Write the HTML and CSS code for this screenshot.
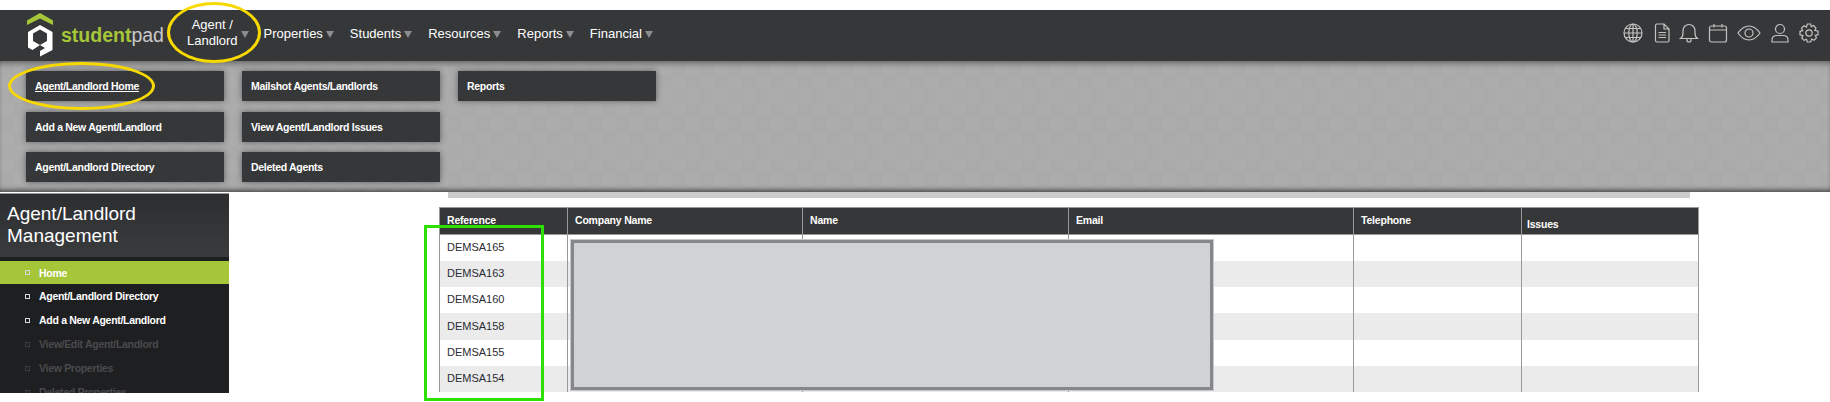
FILE: index.html
```html
<!DOCTYPE html>
<html lang="en">
  <head>
    <meta charset="UTF-8">
    <title>Studentpad - Agent/Landlord Management</title>
    <link rel="stylesheet" href="styles.css">
  </head>
  <body>
    <header class="topbar">
      <a class="logo" href="#">
        <svg class="logo-mark" viewBox="0 0 26 44" width="26" height="44">
          <path d="M0 7.500 L13 0 L26 7.500 V12 L13 5.500 L0 12 Z" fill="#a6c63a"/>
          <path fill-rule="evenodd" d="M13 12 L25.500 19 V37 L13 43.500 V38 L18 35 L13 32 L5.500 37 L1 34.500 V19 Z M13 16.500 L6 20.500 V28 L13 32 L20 28 V20.500 Z" fill="#fff"/>
        </svg>
        <span class="logo-text"><b>student</b>pad</span>
      </a>
      <nav class="mainnav">
        <a class="navitem navitem-two" href="#"><span>Agent /<br>Landlord</span><i class="caret"></i></a>
        <a class="navitem" href="#">Properties<i class="caret"></i></a>
        <a class="navitem" href="#">Students<i class="caret"></i></a>
        <a class="navitem" href="#">Resources<i class="caret"></i></a>
        <a class="navitem" href="#">Reports<i class="caret"></i></a>
        <a class="navitem" href="#">Financial<i class="caret"></i></a>
      </nav>
      <div class="toolicons">
        <svg viewBox="0 0 20 20" width="20" height="20"><circle cx="10" cy="10" r="9"/><ellipse cx="10" cy="10" rx="4.200" ry="9"/><path d="M1 10H19M2.200 5.500H17.800M2.200 14.500H17.800M10 1V19"/></svg>
        <svg viewBox="0 0 20 20" width="20" height="20"><path d="M3.500 2.500Q3.500 1 5 1H12L17 6V17.500Q17 19 15.500 19H5Q3.500 19 3.500 17.500ZM12 1V6H17M6.500 9.500H14M6.500 12H14M6.500 14.500H14"/></svg>
        <svg class="icon-tight" viewBox="0 0 20 20" width="20" height="20"><path d="M1.500 15.500Q4 14 4 10V7.500A6 6 0 0 1 16 7.500V10Q16 14 18.500 15.500ZM8 15.500V17A2 2 0 0 0 12 17V15.500"/></svg>
        <svg viewBox="0 0 20 20" width="20" height="20"><rect x="1.500" y="3" width="17" height="16" rx="2"/><path d="M1.500 7H18.500M6 1V4.500M14 1V4.500"/></svg>
        <svg viewBox="0 0 24 20" width="24" height="20"><path d="M1 10Q6 3 12 3T23 10Q18 17 12 17T1 10Z"/><circle cx="12" cy="10" r="4"/></svg>
        <svg viewBox="0 0 20 20" width="20" height="20"><circle cx="10" cy="6" r="4.500"/><path d="M2 19V17Q2 12.500 7 12.500H13Q18 12.500 18 17V19Z"/></svg>
        <svg viewBox="0 0 20 20" width="20" height="20"><circle cx="10" cy="10" r="3.200"/><path d="M8.300 1H11.700L12.300 3.600L14.600 2.500L17 5L15.800 7.300L19 8.300V11.700L16.300 12.400L17.400 14.800L15 17.200L12.600 16L11.700 19H8.300L7.500 16.300L5 17.400L2.700 15L4 12.600L1 11.700V8.300L3.700 7.600L2.500 5.100L5 2.700L7.400 4Z"/></svg>
      </div>
    </header>

    <section class="subpanel">
      <div class="subgrid">
        <a class="subbtn subbtn-current" href="#">Agent/Landlord Home</a>
        <a class="subbtn" href="#">Mailshot Agents/Landlords</a>
        <a class="subbtn" href="#">Reports</a>
        <a class="subbtn" href="#">Add a New Agent/Landlord</a>
        <a class="subbtn" href="#">View Agent/Landlord Issues</a>
        <span></span>
        <a class="subbtn" href="#">Agent/Landlord Directory</a>
        <a class="subbtn" href="#">Deleted Agents</a>
      </div>
    </section>

    <div class="pagebody">
      <aside class="sidebar">
        <h2 class="sidetitle">Agent/Landlord Management</h2>
        <ul class="sidemenu">
          <li class="active"><a href="#">Home</a></li>
          <li><a href="#">Agent/Landlord Directory</a></li>
          <li><a href="#">Add a New Agent/Landlord</a></li>
          <li class="off"><a href="#">View/Edit Agent/Landlord</a></li>
          <li class="off"><a href="#">View Properties</a></li>
          <li class="off"><a href="#">Deleted Properties</a></li>
        </ul>
      </aside>

      <main class="content">
        <div class="strip"></div>
        <table class="agents">
          <colgroup>
            <col class="c-ref"><col class="c-company"><col class="c-name"><col class="c-email"><col class="c-tel"><col class="c-issues">
          </colgroup>
          <thead>
            <tr>
              <th>Reference</th>
              <th>Company Name</th>
              <th>Name</th>
              <th>Email</th>
              <th>Telephone</th>
              <th class="th-low">Issues</th>
            </tr>
          </thead>
          <tbody>
            <tr><td>DEMSA165</td><td></td><td></td><td></td><td></td><td></td></tr>
            <tr><td>DEMSA163</td><td></td><td></td><td></td><td></td><td></td></tr>
            <tr><td>DEMSA160</td><td></td><td></td><td></td><td></td><td></td></tr>
            <tr><td>DEMSA158</td><td></td><td></td><td></td><td></td><td></td></tr>
            <tr><td>DEMSA155</td><td></td><td></td><td></td><td></td><td></td></tr>
            <tr><td>DEMSA154</td><td></td><td></td><td></td><td></td><td></td></tr>
          </tbody>
        </table>
      </main>
    </div>

    <!-- redaction + highlights drawn over the screenshot -->
    <div class="redact"></div>
    <div class="mark-green"></div>
    <div class="mark-yellow mark-nav"></div>
    <div class="mark-yellow mark-home"></div>
  </body>
</html>
```

FILE: styles.css
```css
html, body {
  margin: 0;
  height: 402px;
  overflow: hidden;
  background: #fff;
}

body {
  position: relative;
  padding-top: 10px;
  box-sizing: border-box;
  font-family: "Liberation Sans", Arial, sans-serif;
}

a {
  color: inherit;
  text-decoration: none;
}

.topbar {
  display: flex;
  align-items: center;
  height: 51px;
  padding-left: 27px;
  background: #363739;
  color: #fff;
}

.logo {
  display: flex;
  align-items: center;
  gap: 8px;
  width: 140px;
  flex: none;
}
.logo-mark {
  flex: none;
  margin-bottom: 2px;
}
.logo-text {
  font-size: 19.500px;
  color: #c9c9c9;
}
.logo-text b {
  color: #a6c63a;
  font-weight: bold;
}

.mainnav {
  display: flex;
  align-items: center;
  padding-bottom: 5px;
  font-size: 13px;
}
.navitem {
  display: flex;
  align-items: center;
  white-space: nowrap;
  margin-right: 16px;
}
.navitem-two {
  margin-left: 20px;
  margin-right: 15px;
  line-height: 16px;
  text-align: center;
}
.caret {
  width: 0;
  height: 0;
  margin: 2px 0 0 3px;
  border-left: 4px solid transparent;
  border-right: 4px solid transparent;
  border-top: 7px solid #8b8c8e;
}

.toolicons {
  display: flex;
  align-items: center;
  gap: 9px;
  margin-left: auto;
  padding: 0 11px 5px 0;
}
.toolicons svg {
  fill: none;
  stroke: #c4c4c4;
  stroke-width: 1.2;
}
.toolicons .icon-tight {
  margin-left: -2px;
}

.subpanel {
  height: 131px;
  box-sizing: border-box;
  padding: 10px 26px;
  background-color: #aaaaaa;
  background-image: conic-gradient(#acacac 25%, transparent 0 50%, #acacac 0 75%, transparent 0);
  background-size: 28px 28px;
  box-shadow: inset 0 6px 6px -4px rgba(0, 0, 0, 0.45), inset 0 -5px 5px -3px rgba(0, 0, 0, 0.6);
}
.subgrid {
  display: grid;
  grid-template-columns: repeat(3, 198px);
  grid-auto-rows: 30px;
  column-gap: 18px;
  row-gap: 10.500px;
}
.subbtn {
  display: flex;
  align-items: center;
  padding-left: 9px;
  background: #363739;
  color: #fff;
  font-size: 10.500px;
  letter-spacing: -0.3px;
  font-weight: bold;
  box-shadow: 0 0 6px rgba(0, 0, 0, 0.45);
}
.subbtn-current {
  text-decoration: underline;
}

.pagebody {
  display: flex;
  height: 200px;
}

.sidebar {
  width: 229px;
  height: 200px;
  margin-top: 1px;
  flex: none;
  overflow: hidden;
  background: #1e1f21;
  border-top: 1px solid #999;
  box-sizing: border-box;
}
.sidetitle {
  margin: 0;
  height: 63px;
  box-sizing: border-box;
  padding: 9px 7px 0;
  font-size: 19px;
  line-height: 22px;
  font-weight: normal;
  color: #fff;
  background: linear-gradient(#2d2e30, #3a3b3d);
}
.sidemenu {
  list-style: none;
  margin: 0;
  padding: 4px 0 0;
  font-size: 10.500px;
  letter-spacing: -0.3px;
  font-weight: bold;
  color: #fff;
}
.sidemenu li {
  display: flex;
  align-items: center;
  height: 24px;
  padding-left: 39px;
  position: relative;
}
.sidemenu li::before {
  content: "";
  position: absolute;
  left: 25px;
  width: 3px;
  height: 3px;
  border: 1px solid #d8d8d8;
}
.sidemenu .active {
  height: 23px;
  background: #a6c63a;
}
.sidemenu .off {
  color: #4a4b4d;
}
.sidemenu .off::before {
  border-color: #3c3d3f;
}

.content {
  flex: 1;
  min-width: 0;
}
.strip {
  width: 1242px;
  height: 6px;
  margin: 0 0 9px 219px;
  background: #cccccc;
}

.agents {
  width: 1260px;
  margin-left: 210px;
  table-layout: fixed;
  border-collapse: collapse;
  font-size: 11px;
}
.c-ref { width: 128px; }
.c-company { width: 235px; }
.c-name { width: 266px; }
.c-email { width: 285px; }
.c-tel { width: 168px; }
.agents th {
  height: 27px;
  padding: 0 7px 2px;
  box-sizing: border-box;
  text-align: left;
  font-size: 10.500px;
  letter-spacing: -0.2px;
  font-weight: bold;
  color: #fff;
  background: #363739;
  border: 1px solid #999;
}
.agents th.th-low {
  padding: 5px 5px 0;
}
.agents td {
  height: 26.300px;
  padding: 0 7px 2px;
  box-sizing: border-box;
  color: #2a2c33;
  border-left: 1px solid #999;
  border-right: 1px solid #999;
}
.agents tbody tr:nth-child(even) td {
  background: #ebebeb;
}

.redact {
  position: absolute;
  left: 571px;
  top: 240px;
  width: 642px;
  height: 150px;
  box-sizing: border-box;
  background: #d1d2d4;
  border: 3px solid #85878a;
  outline: 1px solid #c6c7c9;
}
.mark-green {
  position: absolute;
  left: 424px;
  top: 225px;
  width: 120px;
  height: 176px;
  box-sizing: border-box;
  border: 3px solid #2ee000;
}
.mark-yellow {
  position: absolute;
  box-sizing: border-box;
  border: 3px solid #f7d900;
  border-radius: 50%;
}
.mark-nav {
  left: 167px;
  top: 2px;
  width: 94px;
  height: 61px;
}
.mark-home {
  left: 8px;
  top: 62px;
  width: 147px;
  height: 48px;
}
```
